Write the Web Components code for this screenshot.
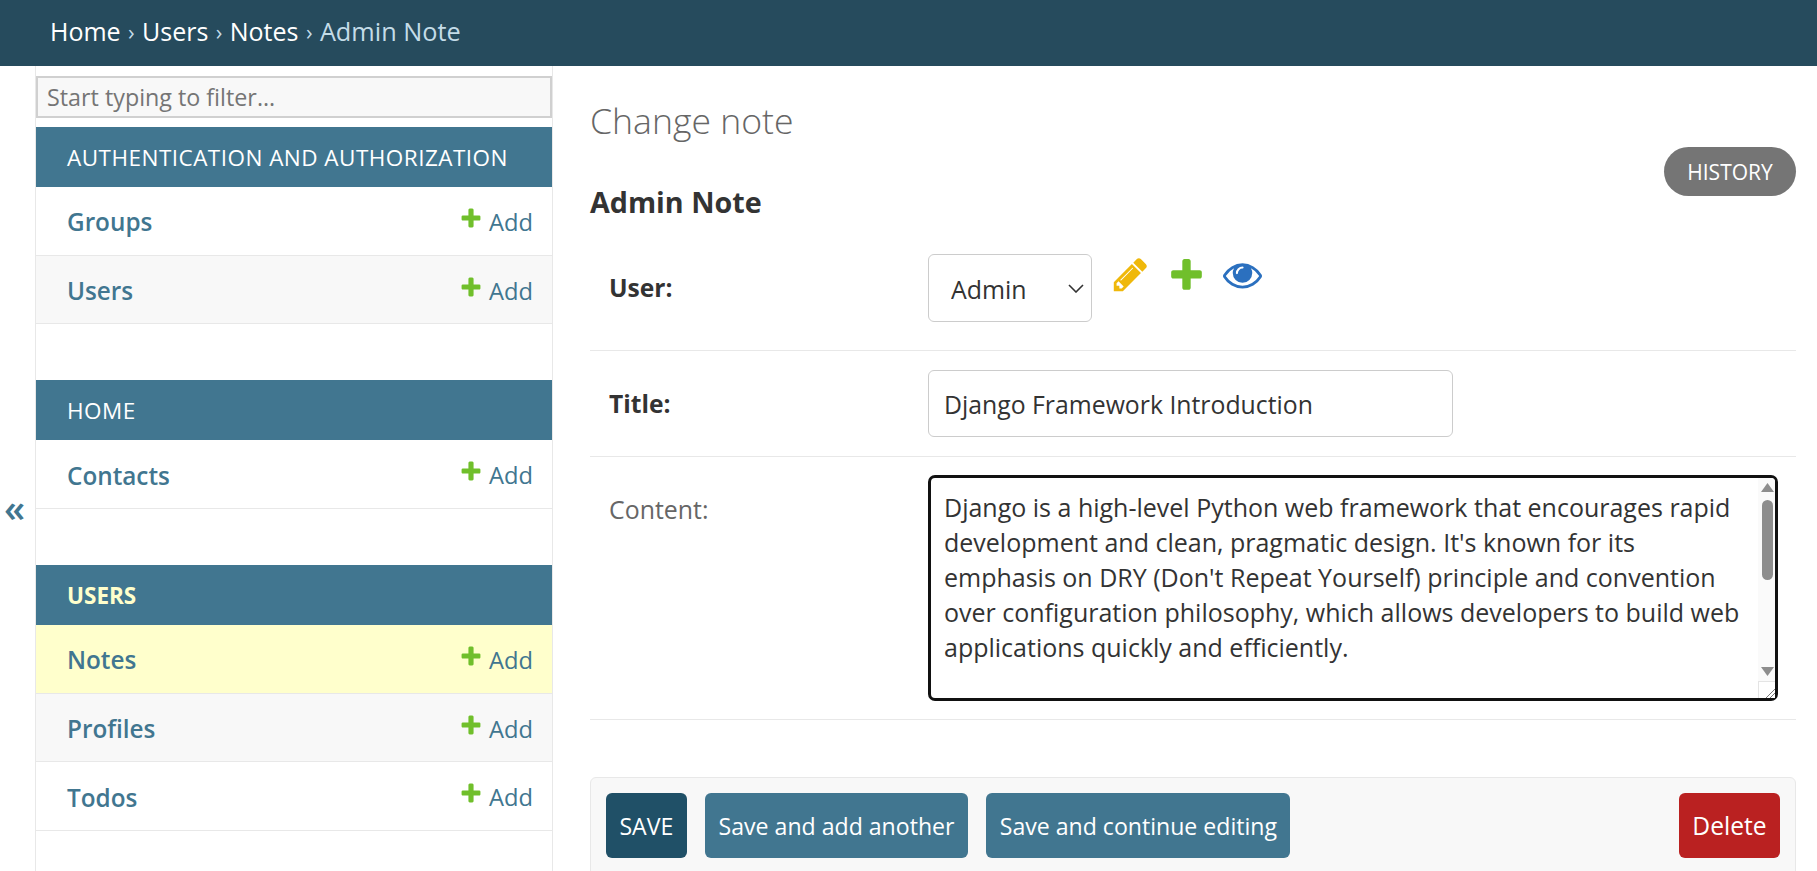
<!DOCTYPE html>
<html lang="en">
<head>
<meta charset="utf-8">
<title>Change note</title>
<style>
  html, body { margin: 0; height: 100%; overflow: hidden; background: #fff; }
  body { font-family: "Open Sans", "Noto Sans", sans-serif; color: #333; }
</style>
</head>
<body>
<admin-page></admin-page>

<script>
const ICONS = {
  add: { fill: "#70bf2b", d: "M1600 796v192q0 40-28 68t-68 28h-416v416q0 40-28 68t-68 28h-192q-40 0-68-28t-28-68v-416h-416q-40 0-68-28t-28-68v-192q0-40 28-68t68-28h416v-416q0-40 28-68t68-28h192q40 0 68 28t28 68v416h416q40 0 68 28t28 68z" },
  change: { fill: "#efb80b", d: "M491 1536l91-91-235-235-91 91v107h128v128h107zm523-928q0-22-22-22-10 0-17 7l-542 542q-7 7-7 17 0 22 22 22 10 0 17-7l542-542q7-7 7-17zm-54-192l416 416-832 832h-416v-416zm683 96q0 53-37 90l-166 166-416-416 166-165q36-38 90-38 53 0 91 38l235 234q37 39 37 90z" },
  view: { fill: "#2b70bf", d: "M1664 960q-152-236-381-353 61 104 61 225 0 185-131.5 316.5t-316.5 131.5-316.5-131.5-131.5-316.5q0-121 61-225-229 117-381 353 133 205 333.5 326.5t434.5 121.5 434.5-121.5 333.5-326.5zm-720-384q0-20-14-34t-34-14q-125 0-214.5 89.5t-89.5 214.5q0 20 14 34t34 14 34-14 14-34q0-86 61-147t147-61q20 0 34-14t14-34zm848 384q0 34-20 69-140 230-376.5 368.5t-499.5 138.5-499.5-139-376.5-368q-20-35-20-69t20-69q140-229 376.5-368t499.5-139 499.5 139 376.5 368q20 35 20 69z" }
};

function iconSvg(name, size) {
  const icon = ICONS[name];
  return `<svg width="${size}" height="${size}" viewBox="0 0 1792 1792" aria-hidden="true"><path fill="${icon.fill}" d="${icon.d}"/></svg>`;
}

class AdminHeader extends HTMLElement {
  constructor() {
    super();
    this.attachShadow({ mode: "open" });
    this.shadowRoot.innerHTML = `
      <style>
        :host { display: flex; align-items: center; box-sizing: border-box; height: 66px; padding: 0 0 4px 50px; background: #264b5d; color: #fff; font-size: 25px; flex: none; }
        .sep { color: #c4dce8; margin: 0 7.4px; font-size: 22px; }
        .current { color: #c4dce8; font-size: 25.3px; }
      </style>
      <span>Home</span><span class="sep">›</span><span>Users</span><span class="sep">›</span><span>Notes</span><span class="sep">›</span><span class="current">Admin Note</span>
    `;
  }
}

class AppModule extends HTMLElement {
  constructor() {
    super();
    this.attachShadow({ mode: "open" });
    this.shadowRoot.innerHTML = `
      <style>
        :host { display: block; margin-bottom: 56px; }
        :host([last]) { margin-bottom: 0; }
        h2 { margin: 0; height: 60px; display: flex; align-items: center; padding-left: 31px; background: #417690; color: #fff; font-size: 22.5px; font-weight: 400; letter-spacing: .47px; }
        :host([current]) h2 { color: #ffc; font-weight: 700; letter-spacing: 0; }
      </style>
      <h2>${this.getAttribute("title")}</h2>
      <slot></slot>
    `;
  }
}

class ModelRow extends HTMLElement {
  constructor() {
    super();
    this.attachShadow({ mode: "open" });
    this.shadowRoot.innerHTML = `
      <style>
        :host { display: flex; align-items: center; justify-content: space-between; box-sizing: border-box; height: 68.7px; padding: 2px 19px 0 31px; border-bottom: 1px solid #e8e8e8; color: #417690; font-size: 24.3px; }
        :host([alt]) { background: #f8f8f8; }
        :host([current]) { background: #ffc; }
        .name { font-weight: 600; }
        .add { display: flex; align-items: center; gap: 6px; font-size: 23.7px; }
        svg { position: relative; top: -4px; }
      </style>
      <span class="name"><slot></slot></span>
      <span class="add">${iconSvg("add", 24)}Add</span>
    `;
  }
}

class NavSidebar extends HTMLElement {
  constructor() {
    super();
    this.attachShadow({ mode: "open" });
    this.shadowRoot.innerHTML = `
      <style>
        :host { display: flex; flex: none; height: 100%; }
        .toggle { width: 36px; flex: none; display: flex; align-items: center; justify-content: center; color: #417690; font-size: 38px; font-weight: 600; padding: 76px 6px 0 0; box-sizing: border-box; border-right: 1px solid #e8e8e8; }
        nav { width: 517px; flex: none; box-sizing: border-box; border-right: 1px solid #e8e8e8; }
        input { display: block; box-sizing: border-box; width: 100%; height: 42px; margin: 10px 0 9px; padding: 0 9px; background: #f8f8f8; border: 2px solid #d0d0d0; font: inherit; font-size: 23.3px; color: #333; outline: none; }
        input::placeholder { color: #757575; opacity: 1; }
      </style>
      <div class="toggle">«</div>
      <nav>
        <input type="text" placeholder="Start typing to filter...">
        <slot></slot>
      </nav>
    `;
  }
}

class FormRow extends HTMLElement {
  constructor() {
    super();
    this.attachShadow({ mode: "open" });
    this.shadowRoot.innerHTML = `
      <style>
        :host { display: flex; align-items: flex-start; box-sizing: border-box; border-bottom: 1px solid #e8e8e8; padding-left: 19px; }
        label { width: 319px; flex: none; font-size: 24.9px; color: #666; }
        :host([required]) label { font-size: 24.6px; font-weight: 700; color: #333; }
        .field { flex: 1; min-width: 0; display: flex; align-items: flex-start; }
      </style>
      <label><slot name="label"></slot></label>
      <div class="field"><slot></slot></div>
    `;
  }
}

class HistoryPill extends HTMLElement {
  constructor() {
    super();
    this.attachShadow({ mode: "open" });
    this.shadowRoot.innerHTML = `
      <style>
        :host { display: flex; align-items: center; justify-content: center; width: 132px; height: 49px; border-radius: 25px; background: #757575; color: #fff; font-size: 21px; }
      </style>
      <slot></slot>
    `;
  }
}

class SelectBox extends HTMLElement {
  constructor() {
    super();
    this.attachShadow({ mode: "open" });
    this.shadowRoot.innerHTML = `
      <style>
        :host { display: block; position: relative; width: 164px; height: 68px; flex: none; }
        select { appearance: none; box-sizing: border-box; width: 100%; height: 100%; padding: 2px 10px 0 22px; background: #fff; border: 1px solid #ccc; border-radius: 6px; font-family: inherit; font-size: 24.9px; color: #333; outline: none; }
        svg { position: absolute; right: 8px; top: 30px; pointer-events: none; }
      </style>
      <select><option>Admin</option></select>
      <svg width="16" height="9" viewBox="0 0 16 9"><path d="M1 1l7 7 7-7" fill="none" stroke="#333" stroke-width="1.6"/></svg>
    `;
  }
}

// scrollbars are hidden in the photograph, so the bar is drawn over the textarea
class NoteText extends HTMLElement {
  constructor() {
    super();
    this.attachShadow({ mode: "open" });
    this.shadowRoot.innerHTML = `
      <style>
        :host { display: block; position: relative; width: 850px; height: 226px; flex: none; }
        textarea { display: block; box-sizing: border-box; width: 100%; height: 100%; padding: 11.5px 32px 0 13px; border: 3px solid #111; border-radius: 7px; font-family: inherit; font-size: 25px; line-height: 35px; color: #333; resize: none; overflow: hidden; outline: none; }
        .bar { position: absolute; right: 3px; top: 3px; bottom: 3px; width: 17px; background: #fafafa; border-radius: 0 4px 4px 0; }
        .up, .down { position: absolute; left: 3px; width: 13px; height: 9px; background: #8d8d8d; }
        .up { top: 5px; clip-path: polygon(50% 0, 100% 100%, 0 100%); }
        .down { top: 189px; clip-path: polygon(0 0, 100% 0, 50% 100%); }
        .thumb { position: absolute; left: 4px; top: 22px; width: 11px; height: 80px; background: #8d8d8d; border-radius: 6px; }
        .corner { position: absolute; left: 0; right: 0; bottom: 0; height: 17px; box-sizing: border-box; border: 1px solid #e4e4e4; border-width: 1px 0 0 1px; background: #fff; }
        .corner svg { position: absolute; right: 0; bottom: 0; }
      </style>
      <textarea><slot></slot></textarea>
      <div class="bar">
        <div class="up"></div>
        <div class="thumb"></div>
        <div class="down"></div>
        <div class="corner"><svg width="10" height="10" viewBox="0 0 10 10"><path d="M1 10l9-9M5 10l5-5" stroke="#777" stroke-width="1"/></svg></div>
      </div>
    `;
    this.shadowRoot.querySelector("textarea").value = this.textContent.trim();
  }
}

class SubmitRow extends HTMLElement {
  constructor() {
    super();
    this.attachShadow({ mode: "open" });
    this.shadowRoot.innerHTML = `
      <style>
        :host { display: flex; gap: 18.5px; box-sizing: border-box; height: 100px; padding: 15px; background: #f8f8f8; border: 1px solid #e8e8e8; border-radius: 6px; }
        ::slotted(button) { height: 65px; padding: 0 13.4px; border: 0; border-radius: 6px; background: #417690; color: #fff; font-family: inherit; font-size: 23.1px; }
        ::slotted(button.default) { background: #205067; }
        ::slotted(button.delete) { margin-left: auto; background: #ba2121; font-size: 24.6px; }
      </style>
      <slot></slot>
    `;
  }
}

class ChangeForm extends HTMLElement {
  constructor() {
    super();
    this.attachShadow({ mode: "open" });
    this.shadowRoot.innerHTML = `
      <style>
        :host { display: block; flex: 1; min-width: 0; box-sizing: border-box; padding: 0 21px 0 37px; overflow: hidden; }
        h1 { margin: 0; padding-top: 31px; height: 81px; box-sizing: border-box; font-size: 35.6px; line-height: 47px; font-weight: 300; color: #666; }
        .top { display: flex; justify-content: flex-end; }
        h2 { margin: -14px 0 0; height: 43px; font-size: 28.7px; font-weight: 700; color: #333; line-height: 40px; }
        .icons { display: flex; gap: 17px; margin: 1px 0 0 19px; }
        .icons svg { display: block; }
        input { box-sizing: border-box; width: 525px; height: 67px; padding: 0 15px; border: 1px solid #ccc; border-radius: 6px; font-family: inherit; color: #333; font-size: 24.8px; outline: none; }
        .user { height: 126px; padding-top: 29px; }
        .title { height: 106px; padding-top: 19px; }
        .content { height: 263px; padding-top: 18px; margin-bottom: 57px; }
        span[slot] { display: block; margin-top: 17px; }
      </style>
      <h1>Change note</h1>
      <div class="top"><history-pill>HISTORY</history-pill></div>
      <h2>Admin Note</h2>
      <form-row class="user" required>
        <span slot="label">User:</span>
        <select-box></select-box>
        <div class="icons">${iconSvg("change", 39)}${iconSvg("add", 39)}${iconSvg("view", 39)}</div>
      </form-row>
      <form-row class="title" required>
        <span slot="label">Title:</span>
        <input type="text" value="Django Framework Introduction">
      </form-row>
      <form-row class="content">
        <span slot="label">Content:</span>
        <note-text>Django is a high-level Python web framework that encourages rapid development and clean, pragmatic design. It's known for its emphasis on DRY (Don't Repeat Yourself) principle and convention over configuration philosophy, which allows developers to build web applications quickly and efficiently.</note-text>
      </form-row>
      <submit-row>
        <button class="default">SAVE</button>
        <button>Save and add another</button>
        <button>Save and continue editing</button>
        <button class="delete">Delete</button>
      </submit-row>
    `;
  }
}

class AdminPage extends HTMLElement {
  constructor() {
    super();
    this.attachShadow({ mode: "open" });
    this.shadowRoot.innerHTML = `
      <style>
        :host { display: flex; flex-direction: column; height: 871px; overflow: hidden; }
        .body { display: flex; flex: 1; min-height: 0; }
      </style>
      <admin-header></admin-header>
      <div class="body">
        <nav-sidebar>
          <app-module title="AUTHENTICATION AND AUTHORIZATION">
            <model-row>Groups</model-row>
            <model-row alt>Users</model-row>
          </app-module>
          <app-module title="HOME">
            <model-row>Contacts</model-row>
          </app-module>
          <app-module title="USERS" current last>
            <model-row current>Notes</model-row>
            <model-row alt>Profiles</model-row>
            <model-row>Todos</model-row>
          </app-module>
        </nav-sidebar>
        <change-form></change-form>
      </div>
    `;
  }
}

customElements.define("admin-header", AdminHeader);
customElements.define("app-module", AppModule);
customElements.define("model-row", ModelRow);
customElements.define("nav-sidebar", NavSidebar);
customElements.define("form-row", FormRow);
customElements.define("history-pill", HistoryPill);
customElements.define("select-box", SelectBox);
customElements.define("note-text", NoteText);
customElements.define("submit-row", SubmitRow);
customElements.define("change-form", ChangeForm);
customElements.define("admin-page", AdminPage);
</script>
</body>
</html>
